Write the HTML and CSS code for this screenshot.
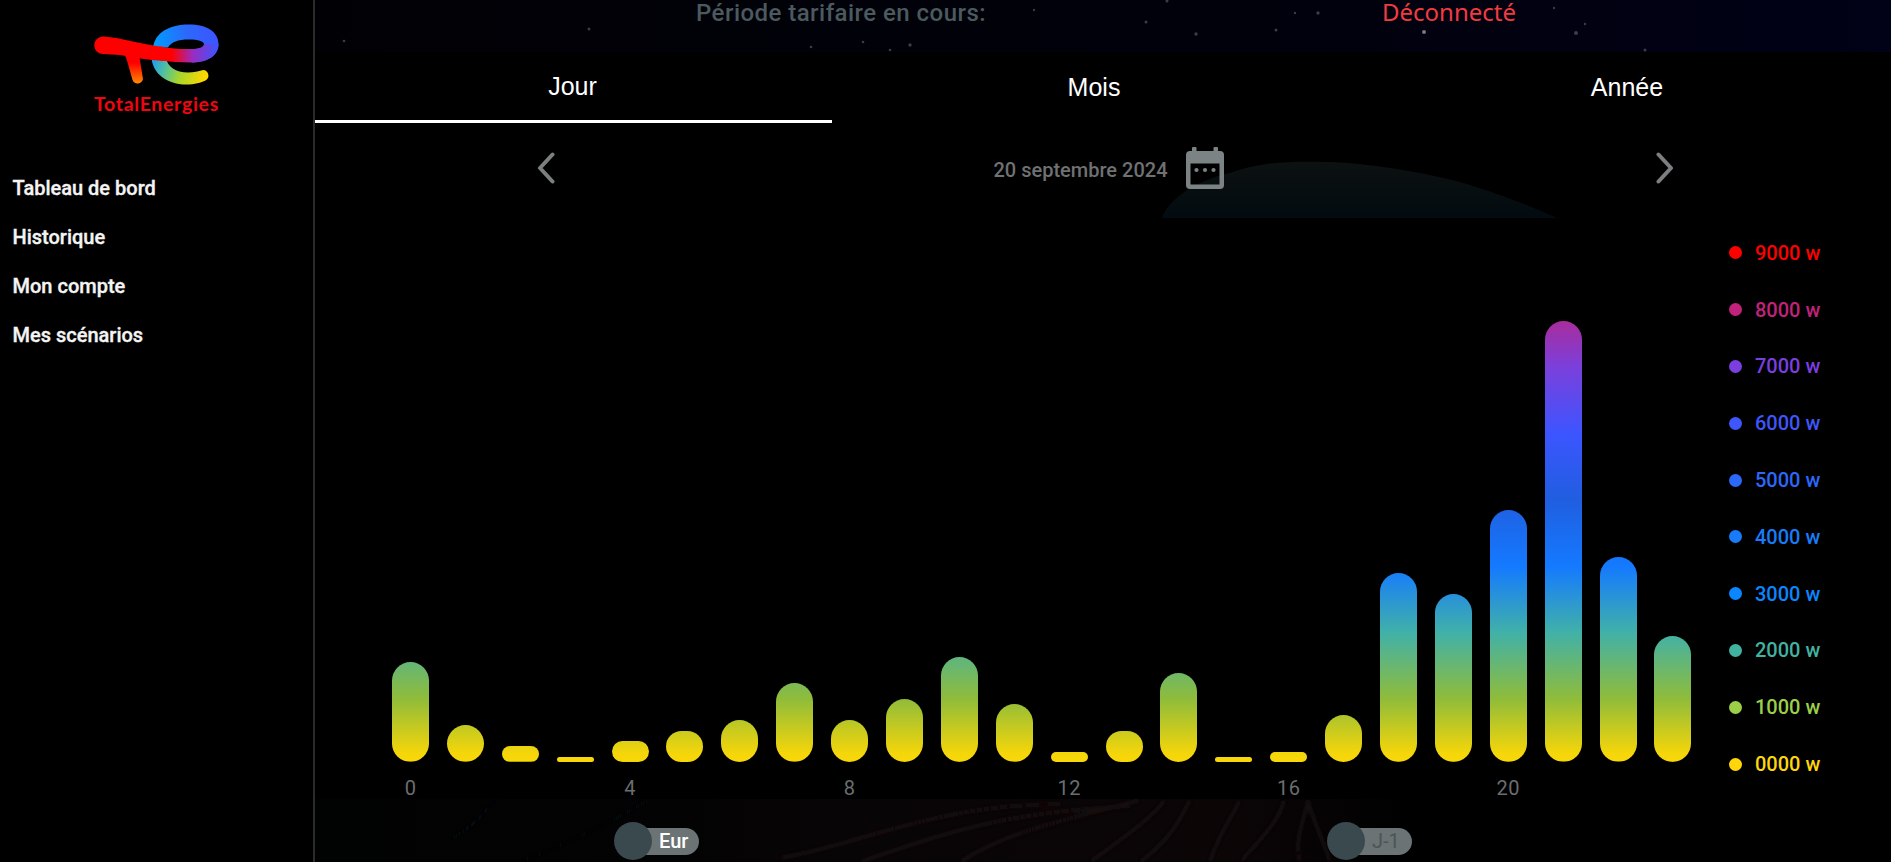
FILE: index.html
```html
<!DOCTYPE html>
<html lang="fr">
<head>
<meta charset="utf-8">
<title>TotalEnergies – Historique</title>
<link rel="stylesheet" href="styles.css">
</head>
<body>
<div class="app">
  <aside class="sidebar">
    <div class="brand">
      <svg class="logo" viewBox="0 0 126 64" width="126" height="64">
        <defs>
          <linearGradient id="gt" x1="0" y1="0" x2="0" y2="1"><stop offset="0.35" stop-color="#f00"/><stop offset="1" stop-color="#ff8a00"/></linearGradient>
          <linearGradient id="gbar" gradientUnits="userSpaceOnUse" x1="78" y1="0" x2="124" y2="0"><stop offset="0" stop-color="#f00"/><stop offset=".45" stop-color="#9a2cc0"/><stop offset="1" stop-color="#3c55ff"/></linearGradient>
          <linearGradient id="gtop" gradientUnits="userSpaceOnUse" x1="60" y1="20" x2="122" y2="14"><stop offset="0" stop-color="#009cff"/><stop offset=".55" stop-color="#2c68fa"/><stop offset="1" stop-color="#3c55ff"/></linearGradient>
          <linearGradient id="glow" gradientUnits="userSpaceOnUse" x1="60" y1="34" x2="112" y2="52"><stop offset="0" stop-color="#1e9ff0"/><stop offset=".25" stop-color="#4fc0a0"/><stop offset=".55" stop-color="#a8d62c"/><stop offset="1" stop-color="#ffd800"/></linearGradient>
        </defs>
        <path d="M57.500 32C57.500 50 74 60.500 92 60.500C101 60.500 107 58.500 111.500 56.500A5.600 5.600 0 0 0 109 46C104 47.500 100 48.500 94 48.500C82 48.500 73 43 72 33Z" fill="url(#glow)"/>
        <path fill-rule="evenodd" d="M59 24C61 8 76 0.500 95 0.500C113 0.500 124.500 8 124.500 20C124.500 31 115 38 98 38.500V25C106 25 110 23.500 110 20.500C110 17 104 15.500 95 15.500C84 15.500 77 18 74 23.500Z" fill="url(#gtop)"/>
        <path d="M24 28C32 30 32 33 34 40L38.500 56A5.500 5.500 0 0 0 49 55L45 30Z" fill="url(#gt)"/>
        <path d="M66 22.500C78 24.500 88 25.300 97 25C105 25 110 23 110 20L124.500 20C124.500 31 115 38.500 97 38.500C86 38.500 76 37.500 66 36.500Z" fill="url(#gbar)"/>
        <path d="M9 12.500C30 14 44 20 70 23V37C54 36 38 33 26 31L9 30A8.700 8.700 0 0 1 9 12.500Z" fill="#f00"/>
      </svg>
      <span class="brand-name">TotalEnergies</span>
    </div>
    <nav class="menu">
      <a>Tableau de bord</a>
      <a>Historique</a>
      <a>Mon compte</a>
      <a>Mes scénarios</a>
    </nav>
  </aside>
  <main class="main">
    <svg class="backdrop" viewBox="315 0 1576 862" width="1576" height="862">
      <defs>
        <linearGradient id="sky" x1="0" x2="1" y1="0" y2="0"><stop offset="0" stop-color="#010105"/><stop offset=".6" stop-color="#01010c"/><stop offset="1" stop-color="#010117"/></linearGradient>
        <linearGradient id="planet" x1="0" x2="0" y1="0" y2="1"><stop offset="0" stop-color="#0c1111"/><stop offset="1" stop-color="#020b10"/></linearGradient>
        <linearGradient id="hair" x1="0" x2="1" y1="0" y2="0"><stop offset="0" stop-color="#010202"/><stop offset=".35" stop-color="#040304"/><stop offset=".5" stop-color="#080506"/><stop offset=".85" stop-color="#0b0506"/><stop offset="1" stop-color="#010102"/></linearGradient>
        <filter id="soft" x="-10%" y="-30%" width="120%" height="160%"><feGaussianBlur stdDeviation="2"/></filter>
      </defs>
      <rect x="315" y="0" width="1576" height="52" fill="url(#sky)"/>
      <g fill="#3c3c44">
        <circle cx="344" cy="41" r="1.300"/><circle cx="589" cy="29" r="1.500"/><circle cx="811" cy="47" r="1.300"/><circle cx="863" cy="42" r="1.300"/><circle cx="890" cy="50" r="1.300"/><circle cx="910" cy="45" r="1.700"/>
        <circle cx="1034" cy="10" r="1.200"/><circle cx="1146" cy="22" r="1.500"/><circle cx="1196" cy="34" r="1.700"/><circle cx="1276" cy="30" r="1.500"/><circle cx="1318" cy="13" r="1.700"/><circle cx="1295" cy="13" r="1.200"/><circle cx="1167" cy="1" r="1.500"/>
        <circle cx="1424" cy="32" r="2" fill="#777"/><circle cx="1576" cy="33" r="2"/><circle cx="1645" cy="50" r="1.500"/><circle cx="1554" cy="8" r="1.200"/><circle cx="1585" cy="24" r="1.200"/>
      </g>
      <path d="M1162 218C1170 195 1205 178 1230 173C1262 162 1285 161 1330 162C1370 163 1420 172 1460 182C1500 194 1530 206 1557 218Z" fill="url(#planet)"/>
      <path d="M315 799H1400V862H315Z" fill="url(#hair)"/>
      <g fill="none" stroke="#150b0c" stroke-width="4" filter="url(#soft)">
        <path d="M780 858C860 845 930 805 1060 804M860 862C940 835 1000 812 1130 806M960 862C1010 830 1060 822 1140 800M1090 862C1120 840 1150 820 1165 800M1140 862C1170 840 1180 820 1190 800M1210 862C1216 840 1230 820 1240 800M1240 862C1260 840 1280 820 1284 800M1308 800C1312 820 1322 835 1330 862M1300 862C1294 840 1304 820 1308 800"/>
      </g>
      <path d="M495 799Q480 822 450 840M650 799Q600 830 520 862" fill="none" stroke="#090c0d" stroke-width="3" filter="url(#soft)"/>
    </svg>
    <header class="status">
      <span class="period">Période tarifaire en cours:</span>
      <span class="offline">Déconnecté</span>
    </header>
    <div class="tabs">
      <div class="tab active">Jour</div>
      <div class="tab">Mois</div>
      <div class="tab">Année</div>
    </div>
    <div class="datebar">
      <svg class="prev" width="18" height="32" viewBox="0 0 18 32"><path d="M15.500 2.500L3 16L15.500 29.500"/></svg>
      <div class="date">
        <span class="date-label">20 septembre 2024</span>
        <svg width="38" height="44" viewBox="0 0 38 44"><path fill="#7b8384" fill-rule="evenodd" d="M6 2Q6 1 7 1H9.500Q10.500 1 10.500 2V5H27.500V2Q27.500 1 28.500 1H31Q32 1 32 2V5H34a4 4 0 0 1 4 4V39a4 4 0 0 1-4 4H4a4 4 0 0 1-4-4V9A4 4 0 0 1 4 5H6ZM4.500 17.500V38.500H33.500V17.500Z"/><g fill="#7b8384"><circle cx="10.500" cy="24" r="2.100"/><circle cx="19" cy="24" r="2.100"/><circle cx="27.500" cy="24" r="2.100"/></g></svg>
      </div>
      <svg class="next" width="18" height="32" viewBox="0 0 18 32"><path d="M2.500 2.500L15 16L2.500 29.500"/></svg>
    </div>
    <section class="panel">
      <div class="plot" id="plot"></div>
      <ul class="legend">
        <li class="w9">9000 w</li>
        <li class="w8">8000 w</li>
        <li class="w7">7000 w</li>
        <li class="w6">6000 w</li>
        <li class="w5">5000 w</li>
        <li class="w4">4000 w</li>
        <li class="w3">3000 w</li>
        <li class="w2">2000 w</li>
        <li class="w1">1000 w</li>
        <li class="w0">0000 w</li>
      </ul>
    </section>
    <footer class="switches">
      <div class="switch on"><i class="knob"></i><span>Eur</span></div>
      <div class="switch"><i class="knob"></i><span>J-1</span></div>
    </footer>
  </main>
</div>
<script src="chart.js"></script>
</body>
</html>
```

FILE: styles.css
```css
* { box-sizing: border-box; }
body {
  margin: 0;
  background: #000;
  color: #fff;
  font-family: Roboto, "Liberation Sans", sans-serif;
  overflow: hidden;
}
.app { display: flex; width: 1891px; height: 862px; }

.sidebar { width: 315px; flex: none; border-right: 2px solid #2b2b2b; padding-top: 24px; }
.brand { display: flex; flex-direction: column; align-items: center; height: 140px; }
.logo { display: block; overflow: visible; }
.brand-name {
  font: 700 19.500px/24px Lato, sans-serif;
  letter-spacing: .68px;
  color: #f00510;
  margin-top: 4px;
  white-space: nowrap;
}
.menu { display: flex; flex-direction: column; padding-left: 12.500px; }
.menu a {
  font-size: 20px;
  font-weight: 500;
  line-height: 49px;
  color: #f4f4f4;
  -webkit-text-stroke: .35px #f4f4f4;
}

.main { position: relative; flex: 1; display: flex; flex-direction: column; isolation: isolate; }
.backdrop { position: absolute; inset: 0; z-index: -1; }

.status { height: 52px; display: flex; }
.period { width: 1067px; padding-left: 381px; font-size: 24px; font-weight: 500; line-height: 27px; letter-spacing: .46px; color: #4b5a5f; }
.offline { font: 400 24px/24px "Noto Sans", sans-serif; color: #f23b41; }

.tabs { display: grid; grid-template-columns: 517px 524px 1fr; height: 71px; }
.tab { font: 25px/70px "Liberation Sans", sans-serif; text-align: center; }
.tab.active { border-bottom: 3px solid #fff; line-height: 68px; padding-right: 2px; }
.tab:last-child { padding-left: 7px; }

.datebar { height: 96px; display: flex; align-items: flex-start; padding: 23px 217px 0 222px; justify-content: space-between; }
.datebar path { stroke-linecap: round; stroke-linejoin: round; }
.prev, .next { fill: none; stroke: #7b7f80; stroke-width: 4; margin-top: 6px; }
.date { display: flex; align-items: flex-start; gap: 18px; padding-left: 6px; }
.date-label { font-size: 20px; line-height: 48px; font-weight: 500; color: #6f7172; }

.panel { height: 580px; background: #000; display: flex; }
.plot { display: flex; gap: 17.900px; padding: 0 0 0 77px; width: 1414px; height: 580px; }
.column { width: 37px; flex: none; display: flex; flex-direction: column; align-items: center; }
.track { width: 37px; height: 543px; flex: none; display: flex; align-items: flex-end; }
.bar {
  width: 37px;
  border-radius: 18.500px;
  background: linear-gradient(to top, #f8d808 0, #f5d60a 8px, #8fbc3a 63px, #41b1a8 129px, #147aff 195px, #205ee0 262px, #3c55ff 328px, #7a40dc 394px, #bc2482 460px) bottom / 37px 460px no-repeat;
}
.hour { font-size: 20px; line-height: 24px; margin-top: 14px; letter-spacing: .5px; color: #6a6e70; }

.legend { list-style: none; margin: 0; padding: 5.500px 0 0; }
.legend li {
  display: flex; align-items: center; gap: 13px; height: 56.800px;
  font-size: 20px; font-weight: 500;
}
.legend li::before { content: ""; width: 13px; height: 13px; border-radius: 50%; background: currentColor; }
.w9 { color: #ff0000; }
.w8 { color: #c2227c; }
.w7 { color: #7b3fe0; }
.w6 { color: #3f57fa; }
.w5 { color: #2c68fa; }
.w4 { color: #187cfa; }
.w3 { color: #0a86ff; }
.w2 { color: #42b3a0; }
.w1 { color: #9ccf48; }
.w0 { color: #ffd60a; }

.switches { height: 63px; display: flex; padding: 23px 0 0 299px; gap: 628px; }
.switch { display: flex; align-items: center; height: 38px; width: 85px; }
.knob { width: 38px; height: 38px; border-radius: 50%; background: #3a494e; flex: none; z-index: 1; }
.switch span {
  width: 66px; height: 27px; margin-left: -19px; padding-left: 26px;
  border-radius: 14px; background: #6b7374; color: #4a5557;
  font-size: 20px; line-height: 27px; flex: none;
}
.switch.on span { color: #fff; font-weight: 500; }
```

FILE: chart.js
```js
const readings = [19, 7, 3, 1, 4, 6, 8, 15, 8, 12, 20, 11, 2, 6, 17, 1, 2, 9, 36, 32, 48, 84, 39, 24];
const unit = 5.245;
const plot = document.getElementById('plot');

readings.forEach((value, hour) => {
  const column = document.createElement('div');
  column.className = 'column';
  const track = document.createElement('div');
  track.className = 'track';
  const bar = document.createElement('div');
  bar.className = 'bar';
  bar.style.height = value * unit + 'px';
  track.append(bar);
  column.append(track);
  if (hour % 4 === 0) {
    const label = document.createElement('span');
    label.className = 'hour';
    label.textContent = hour;
    column.append(label);
  }
  plot.append(column);
});
```
